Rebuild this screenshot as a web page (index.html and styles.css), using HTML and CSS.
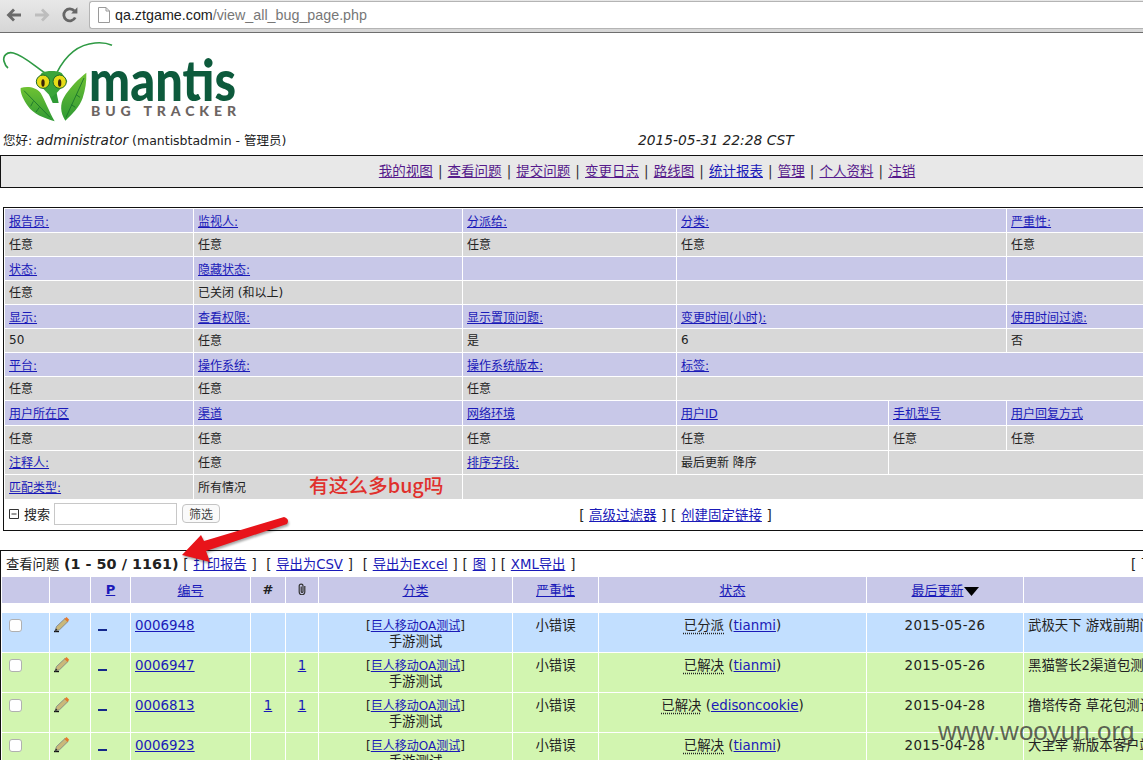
FILE: index.html
```html
<!DOCTYPE html>
<html lang="zh-CN">
<head>
  <meta charset="UTF-8" />
  <title>查看问题 - MantisBT</title>
  <link rel="stylesheet" href="styles.css">
</head>
<body>
  <div class="toolbar">
    <svg class="nav-icon" width="18" height="18" viewBox="0 0 18 18"><path d="M1.500 9 L8 2.500 L10 4.500 L7 7.500 H16 V10.500 H7 L10 13.500 L8 15.500 Z" fill="#6a6a6a"/></svg>
    <svg class="nav-icon" width="18" height="18" viewBox="0 0 18 18"><path d="M16.500 9 L10 2.500 L8 4.500 L11 7.500 H2 V10.500 H11 L8 13.500 L10 15.500 Z" fill="#bdbdbd"/></svg>
    <svg class="nav-icon" width="18" height="18" viewBox="0 0 18 18"><path d="M14.200 11.500 A6 6 0 1 1 13.400 5" fill="none" stroke="#666" stroke-width="2.800"/><path d="M10.200 7.400 H16.400 V1.200 Z" fill="#666"/></svg>
    <div class="address">
      <svg width="12" height="16" viewBox="0 0 12 16"><path d="M.5.500 H8 L11.500 4 V15.500 H.5 Z M8 .5 V4 H11.500" fill="#fff" stroke="#9a9a9a"/></svg>
      <span class="host">qa.ztgame.com</span><span class="path">/view_all_bug_page.php</span>
    </div>
  </div>

  <div class="page">
    <svg class="logo" width="240" height="84" viewBox="0 0 720 252">
      <defs>
        <linearGradient id="leaf" x1="0" y1="0" x2="0" y2="1">
          <stop offset="0" stop-color="#6fc232"/>
          <stop offset="1" stop-color="#2f9a35"/>
        </linearGradient>
      </defs>
      <path d="M135 105 C105 85 70 52 40 45 C20 40 8 55 12 70 C14 78 18 85 24 90" fill="none" stroke="#2f9a44" stroke-width="5"/>
      <path d="M170 105 C190 65 225 20 285 15 C305 13 325 17 336 22" fill="none" stroke="#2f9a44" stroke-width="5"/>
      <path d="M145 165 L158 195 L176 195 L170 165 Z" fill="#2f9a35"/>
      <path d="M62 150 C80 144 108 146 122 165 C134 185 148 222 164 250 C130 240 100 228 84 205 C72 188 60 165 62 150 Z" fill="url(#leaf)"/>
      <path d="M72 158 L150 238 M100 190 L92 205 M118 208 L108 222" stroke="#17702b" stroke-width="2.500" fill="none"/>
      <path d="M259 104 C238 120 206 152 192 178 C180 198 180 224 196 248 C216 230 240 205 248 180 C256 155 260 130 259 104 Z" fill="url(#leaf)"/>
      <path d="M252 120 L198 238 M228 170 L240 178 M214 200 L226 208" stroke="#17702b" stroke-width="2.500" fill="none"/>
      <path d="M125 105 C140 97 170 97 185 105 L202 130 L170 165 L155 178 L142 165 L108 130 Z" fill="#3ba53a"/>
      <circle cx="129" cy="131" r="20" fill="#e8dc18" stroke="#1d6b2a" stroke-width="3"/>
      <circle cx="179" cy="131" r="20" fill="#e8dc18" stroke="#1d6b2a" stroke-width="3"/>
      <ellipse cx="129" cy="135" rx="5" ry="11" fill="#3a2408"/>
      <ellipse cx="179" cy="135" rx="5" ry="11" fill="#3a2408"/>
      <text class="logo-name" x="267" y="189" textLength="441" lengthAdjust="spacingAndGlyphs">mantis</text>
      <text class="logo-sub" x="273" y="234" textLength="435">BUG TRACKER</text>
    </svg>

    <div class="login-info">
      <div class="login-user">您好: <em>administrator</em> (mantisbtadmin - 管理员)</div>
      <div class="login-time">2015-05-31 22:28 CST</div>
    </div>

    <div class="menu">
      <a href="#">我的视图</a> | <a href="#">查看问题</a> | <a href="#">提交问题</a> | <a href="#">变更日志</a> | <a href="#">路线图</a> | <a class="fresh" href="#">统计报表</a> | <a href="#">管理</a> | <a href="#">个人资料</a> | <a href="#">注销</a>
    </div>

    <table class="filters">
      <colgroup>
        <col class="f1"><col class="f2"><col class="f3"><col class="f4"><col class="f5"><col class="f6">
      </colgroup>
      <tr class="head"><td><a href="#">报告员:</a></td><td><a href="#">监视人:</a></td><td><a href="#">分派给:</a></td><td colspan="2"><a href="#">分类:</a></td><td><a href="#">严重性:</a></td></tr>
      <tr><td>任意</td><td>任意</td><td>任意</td><td colspan="2">任意</td><td>任意</td></tr>
      <tr class="head"><td><a href="#">状态:</a></td><td><a href="#">隐藏状态:</a></td><td></td><td colspan="2"></td><td></td></tr>
      <tr><td>任意</td><td>已关闭 (和以上)</td><td></td><td colspan="2"></td><td></td></tr>
      <tr class="head"><td><a href="#">显示:</a></td><td><a href="#">查看权限:</a></td><td><a href="#">显示置顶问题:</a></td><td colspan="2"><a href="#">变更时间(小时):</a></td><td><a href="#">使用时间过滤:</a></td></tr>
      <tr><td>50</td><td>任意</td><td>是</td><td colspan="2">6</td><td>否</td></tr>
      <tr class="head"><td><a href="#">平台:</a></td><td><a href="#">操作系统:</a></td><td><a href="#">操作系统版本:</a></td><td colspan="3"><a href="#">标签:</a></td></tr>
      <tr><td>任意</td><td>任意</td><td>任意</td><td colspan="3"></td></tr>
      <tr class="head tall"><td><a href="#">用户所在区</a></td><td><a href="#">渠道</a></td><td><a href="#">网络环境</a></td><td><a href="#">用户ID</a></td><td><a href="#">手机型号</a></td><td><a href="#">用户回复方式</a></td></tr>
      <tr class="tall"><td>任意</td><td>任意</td><td>任意</td><td>任意</td><td>任意</td><td>任意</td></tr>
      <tr><td><a href="#">注释人:</a></td><td>任意</td><td><a href="#">排序字段:</a></td><td>最后更新 降序</td><td colspan="2"></td></tr>
      <tr class="tall"><td><a href="#">匹配类型:</a></td><td>所有情况</td><td colspan="4"></td></tr>
      <tr class="search-row">
        <td colspan="2">
          <div class="search">
            <svg width="10" height="10" viewBox="0 0 10 10"><path d="M.5.500 H9.500 V9.500 H.5 Z M2.500 5 H7.500" fill="none" stroke="#333"/></svg>
            <span>搜索</span>
            <input type="text">
            <button>筛选</button>
          </div>
        </td>
        <td colspan="2" class="filter-links">[ <a href="#">高级过滤器</a> ] [ <a href="#">创建固定链接</a> ]</td>
        <td colspan="2"></td>
      </tr>
    </table>

    <table class="bugs">
      <colgroup>
        <col class="c1"><col class="c2"><col class="c3"><col class="c4"><col class="c5"><col class="c6"><col class="c7"><col class="c8"><col class="c9"><col class="c10"><col class="c11">
      </colgroup>
      <tr class="title-row">
        <td colspan="10">查看问题 <b>(1 - 50 / 1161)</b> [ <a href="#">打印报告</a> ] &nbsp;[ <a href="#">导出为CSV</a> ] &nbsp;[ <a href="#">导出为Excel</a> ] [ <a href="#">图</a> ] [ <a href="#">XML导出</a> ]</td>
        <td class="title-right">[ 下</td>
      </tr>
      <tr class="bug-head">
        <td></td>
        <td></td>
        <td><a class="strong" href="#">P</a></td>
        <td><a href="#">编号</a></td>
        <td><b>#</b></td>
        <td>
          <svg class="clip" width="8" height="12" viewBox="0 0 8 12"><path d="M6.800 3 V9 A2.800 2.800 0 0 1 1.200 9 V3 A1.900 1.900 0 0 1 5 3 V8.500 A.9 .9 0 0 1 3.200 8.500 V3.500" fill="none" stroke="#333" stroke-width="1.200"/></svg>
        </td>
        <td><a href="#">分类</a></td>
        <td><a href="#">严重性</a></td>
        <td><a href="#">状态</a></td>
        <td><a href="#">最后更新</a><svg width="15" height="9" viewBox="0 0 15 9"><path d="M0 0 H15 L7.500 9 Z" fill="#000"/></svg></td>
        <td></td>
      </tr>
      <tr class="gap"><td colspan="11"></td></tr>

      <tr class="bug assigned">
        <td><input type="checkbox"></td>
        <td><svg class="pencil" width="17" height="17" viewBox="0 0 17 17"><path d="M1 15.500 H6" stroke="#111" stroke-width="1.400"/><path d="M2 15 L3.500 10.500 L12 2.500 L15 5.500 L6.500 13.800 Z" fill="#c9b87a" stroke="#6f7480" stroke-width=".7"/><path d="M11.500 3 L13.500 1 L16.200 3.800 L14.500 6 Z" fill="#e6792b"/><path d="M2 15 L3 12.500 L4.500 14 Z" fill="#222"/></svg></td>
        <td><a class="pri" href="#"></a></td>
        <td><a href="#">0006948</a></td>
        <td></td>
        <td></td>
        <td class="center cat"><small>[<a href="#">巨人移动OA测试</a>]</small><br>手游测试</td>
        <td class="center">小错误</td>
        <td class="center"><u>已分派</u> (<a href="#">tianmi</a>)</td>
        <td class="center date">2015-05-26</td>
        <td>武极天下 游戏前期问题</td>
      </tr>
      <tr class="bug resolved">
        <td><input type="checkbox"></td>
        <td><svg class="pencil" width="17" height="17" viewBox="0 0 17 17"><path d="M1 15.500 H6" stroke="#111" stroke-width="1.400"/><path d="M2 15 L3.500 10.500 L12 2.500 L15 5.500 L6.500 13.800 Z" fill="#c9b87a" stroke="#6f7480" stroke-width=".7"/><path d="M11.500 3 L13.500 1 L16.200 3.800 L14.500 6 Z" fill="#e6792b"/><path d="M2 15 L3 12.500 L4.500 14 Z" fill="#222"/></svg></td>
        <td><a class="pri" href="#"></a></td>
        <td><a href="#">0006947</a></td>
        <td></td>
        <td class="center"><a href="#">1</a></td>
        <td class="center cat"><small>[<a href="#">巨人移动OA测试</a>]</small><br>手游测试</td>
        <td class="center">小错误</td>
        <td class="center"><u>已解决</u> (<a href="#">tianmi</a>)</td>
        <td class="center date">2015-05-26</td>
        <td>黑猫警长2渠道包测试</td>
      </tr>
      <tr class="bug resolved">
        <td><input type="checkbox"></td>
        <td><svg class="pencil" width="17" height="17" viewBox="0 0 17 17"><path d="M1 15.500 H6" stroke="#111" stroke-width="1.400"/><path d="M2 15 L3.500 10.500 L12 2.500 L15 5.500 L6.500 13.800 Z" fill="#c9b87a" stroke="#6f7480" stroke-width=".7"/><path d="M11.500 3 L13.500 1 L16.200 3.800 L14.500 6 Z" fill="#e6792b"/><path d="M2 15 L3 12.500 L4.500 14 Z" fill="#222"/></svg></td>
        <td><a class="pri" href="#"></a></td>
        <td><a href="#">0006813</a></td>
        <td class="center"><a href="#">1</a></td>
        <td class="center"><a href="#">1</a></td>
        <td class="center cat"><small>[<a href="#">巨人移动OA测试</a>]</small><br>手游测试</td>
        <td class="center">小错误</td>
        <td class="center"><u>已解决</u> (<a href="#">edisoncookie</a>)</td>
        <td class="center date">2015-04-28</td>
        <td>撸塔传奇 草花包测试</td>
      </tr>
      <tr class="bug resolved">
        <td><input type="checkbox"></td>
        <td><svg class="pencil" width="17" height="17" viewBox="0 0 17 17"><path d="M1 15.500 H6" stroke="#111" stroke-width="1.400"/><path d="M2 15 L3.500 10.500 L12 2.500 L15 5.500 L6.500 13.800 Z" fill="#c9b87a" stroke="#6f7480" stroke-width=".7"/><path d="M11.500 3 L13.500 1 L16.200 3.800 L14.500 6 Z" fill="#e6792b"/><path d="M2 15 L3 12.500 L4.500 14 Z" fill="#222"/></svg></td>
        <td><a class="pri" href="#"></a></td>
        <td><a href="#">0006923</a></td>
        <td></td>
        <td></td>
        <td class="center cat"><small>[<a href="#">巨人移动OA测试</a>]</small><br>手游测试</td>
        <td class="center">小错误</td>
        <td class="center"><u>已解决</u> (<a href="#">tianmi</a>)</td>
        <td class="center date">2015-04-28</td>
        <td>大主宰 新版本客户端</td>
      </tr>
    </table>

    <!-- things painted on top of the screenshot -->
    <div class="note">有这么多bug吗</div>
    <svg class="arrow" width="120" height="60" viewBox="175 505 120 60">
      <path d="M182 550 L201 530 L204 536 L284 512 Q290 514 287 519 L206 546 L210 557 Z" fill="#e8141a"/>
    </svg>
    <div class="watermark">www.wooyun.org</div>
  </div>
</body>
</html>
```

FILE: styles.css
```css
html, body { margin: 0; height: 760px; overflow: hidden; background: #fff; }
body { font-family: "DejaVu Sans", "Noto Sans CJK SC", sans-serif; font-size: 12px; color: #222; }
a { color: #1a1ab8; }

/* browser bar */
.toolbar { display: flex; align-items: flex-start; height: 32px; background: linear-gradient(#e8e8e8, #d6d6d6); border-bottom: 1px solid #6e6e6e; box-sizing: content-box; padding-left: 5px; }
.nav-icon { margin: 6px 10px 0 0; }
.address { display: flex; align-items: center; gap: 5px; margin: 1px 0 0 0; flex: 1; height: 26px; padding-left: 8px; background: #fff; border: 1px solid #b4b4b4; border-right: 0; border-radius: 3px 0 0 3px; font-family: "Liberation Sans", sans-serif; font-size: 14.300px; }
.address .host { color: #222; margin-right: -5px; }
.address .path { color: #777; }

.page { position: relative; width: 1293px; }

/* logo */
.logo { display: block; margin-top: 5px; }
.logo-name { font-family: Lato, sans-serif; font-weight: 900; font-size: 174px; fill: #0d5a3c; }
.logo-sub { font-family: Lato, sans-serif; font-weight: 900; font-size: 42px; fill: #6c6462; }

.login-info { display: grid; grid-template-columns: 635px auto; align-items: center; height: 18px; margin-top: 8px; padding-left: 3px; }
.login-user { font-size: 12.500px; }
.login-user em { font-size: 13.600px; }
.login-time { font-size: 13.800px; font-style: italic; }

.menu { height: 31px; line-height: 31px; margin-top: 7px; background: #e8e8e8; border: 1px solid #111; border-right: 0; text-align: center; font-size: 13.500px; word-spacing: .8px; color: #333; }
.menu a { color: #551a8b; }
.menu a.fresh { color: #1a1ab8; }

/* filter box */
.filters { table-layout: fixed; width: 1290px; margin: 19px 0 0 3px; border: 1px solid #111; border-spacing: 1px; }
.f1 { width: 188px; }
.f2 { width: 268px; }
.f3 { width: 213px; }
.f4 { width: 211px; }
.f5 { width: 117px; }
.filters td { height: 23px; padding: 0 4px 2px; background: #d8d8d8; box-sizing: border-box; }
.filters .head td { padding-bottom: 0; background: #c8c8e8; }
.filters .tall td { height: 24px; padding-bottom: 2px; }
.filters .search-row td { height: 29px; background: #fff; }
.search { display: flex; align-items: center; gap: 5px; font-size: 13px; }
.search input { width: 123px; height: 22px; margin: 0 0 0 -1px; padding: 0; box-sizing: border-box; border: 1px solid #c8c8c8; }
.search button { width: 38px; height: 19px; padding: 0; font: inherit; font-size: 12px; background: #fafafa; border: 1px solid #c4c4c4; border-radius: 4px; color: #444; }
.filters .filter-links { text-align: center; font-size: 13.500px; word-spacing: .3px; }

/* bug list */
.bugs { table-layout: fixed; width: 1293px; margin-top: 19px; border: 1px solid #111; border-right: 0; border-spacing: 1px; font-size: 13.400px; }
.c1 { width: 47px; }
.c2 { width: 40px; }
.c3 { width: 39px; }
.c4 { width: 119px; }
.c5 { width: 34px; }
.c6 { width: 32px; }
.c7 { width: 193px; }
.c8 { width: 85px; }
.c9 { width: 267px; }
.c10 { width: 156px; }
.bugs td { padding: 0; box-sizing: border-box; }
.title-row td { height: 24px; padding: 0 0 2px 4px; font-size: 13.300px; word-spacing: .6px; }
.title-row b { font-size: 14.400px; word-spacing: 0; }
.title-row .title-right { padding-left: 107px; white-space: nowrap; overflow: hidden; }
.bug-head td { height: 26px; padding-bottom: 2px; background: #c8c8e8; text-align: center; font-size: 13px; }
.bug-head svg { vertical-align: -1px; }
.bug-head .clip { vertical-align: -1px; }
.strong { font-weight: bold; }
.gap td { height: 8px; }
.bug td { height: 39px; padding: 5px 4px 0; vertical-align: top; line-height: 15px; overflow: hidden; white-space: nowrap; }
.assigned td { background: #c2dfff; }
.resolved td { background: #d2f5b0; }
.center { text-align: center; }
.bug .cat { padding-top: 4px; }
.bug .cat small { font-size: 12px; vertical-align: -1px; }
.bug .date { letter-spacing: .3px; }
.bug u { text-decoration: underline dotted; text-underline-offset: 3px; }
.bug input { appearance: none; display: block; width: 13px; height: 13px; margin: 1px 0 0 3px; background: #fff; border: 1px solid #b0b0b0; border-radius: 3px; }
.pencil { display: block; margin: -2px 0 0 -1px; }
.pri { display: block; width: 9px; height: 2px; margin: 11px 0 0 3px; background: #14288c; }

/* annotations */
.note { position: absolute; left: 309px; top: 432px; font-family: "Noto Sans CJK SC", sans-serif; font-size: 19.700px; font-weight: 500; color: #e0302c; }
.arrow { position: absolute; left: 175px; top: 472px; filter: drop-shadow(1px 2px 1px rgba(0, 0, 0, .35)); }
.watermark { position: absolute; left: 938px; top: 678px; font-family: "Liberation Sans", sans-serif; font-size: 26px; color: rgba(50, 50, 50, .75); }
```
